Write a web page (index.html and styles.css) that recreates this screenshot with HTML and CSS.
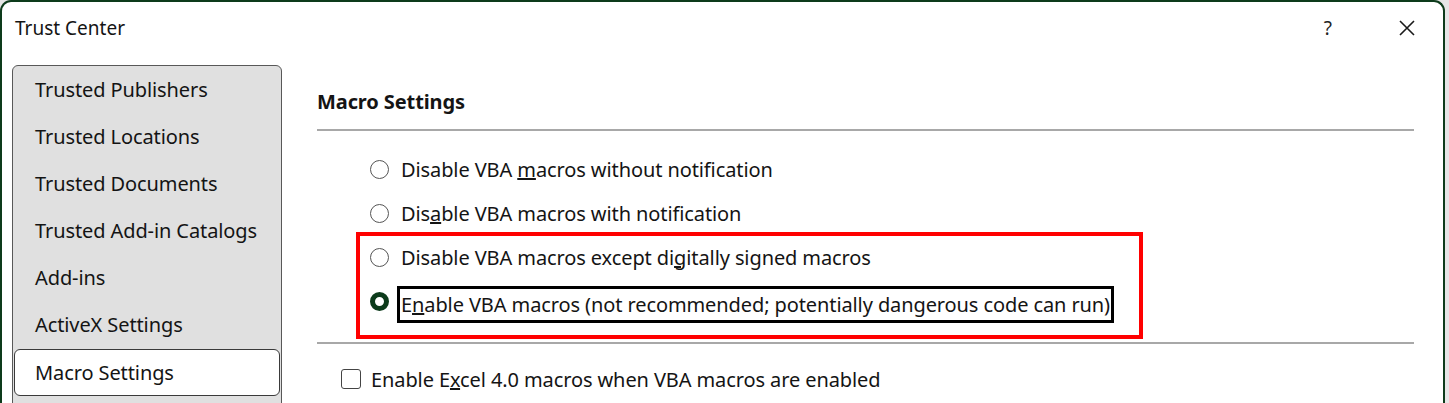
FILE: index.html
```html
<!DOCTYPE html>
<html>
<head>
<meta charset="utf-8">
<link rel="stylesheet" href="styles.css">
</head>
<body>
<div class="window">
  <div class="titlebar">
    <span class="title">Trust Center</span>
    <span class="spacer"></span>
    <span class="help">?</span>
    <span class="close"><svg width="16" height="16" viewBox="0 0 16 16"><path d="M1 1 L15 15 M15 1 L1 15" stroke="#1a1a1a" stroke-width="1.6" fill="none"/></svg></span>
  </div>
  <div class="content">
    <div class="sidebar">
      <div class="item">Trusted Publishers</div>
      <div class="item">Trusted Locations</div>
      <div class="item">Trusted Documents</div>
      <div class="item">Trusted Add-in Catalogs</div>
      <div class="item">Add-ins</div>
      <div class="item">ActiveX Settings</div>
      <div class="item selected">Macro Settings</div>
    </div>
    <div class="main">
      <div class="heading">Macro Settings</div>
      <div class="rule"></div>
      <div class="options">
        <div class="opt plain"><span class="radio"></span><span class="label">Disable VBA <u>m</u>acros without notification</span></div>
        <div class="opt plain"><span class="radio"></span><span class="label">Dis<u>a</u>ble VBA macros with notification</span></div>
        <div class="redbox">
          <div class="opt third"><span class="radio"></span><span class="label">Disable VBA macros except di<u>g</u>itally signed macros</span></div>
          <div class="opt fourth"><span class="radio checked"></span><span class="label focus">E<u>n</u>able VBA macros (not recommended; potentially dangerous code can run)</span></div>
        </div>
      </div>
      <div class="rule rule2"></div>
      <div class="check-row"><span class="checkbox"></span><span class="label">Enable E<u>x</u>cel 4.0 macros when VBA macros are enabled</span></div>
    </div>
  </div>
</div>
</body>
</html>
```
FILE: styles.css
```css
html, body {
  margin: 0;
  padding: 0;
  background: #e6e6e6;
  overflow: hidden;
}
body {
  font-family: "Noto Sans", "Open Sans", sans-serif;
  color: #141414;
  font-size: 20px;
  width: 1449px;
  height: 403px;
}
.window {
  width: 1441px;
  height: 401px;
  overflow: hidden;
  background: #fff;
  border: 2px solid #0d3b1b;
  border-bottom: none;
  border-radius: 11px 11px 0 0;
}
.titlebar {
  height: 52px;
  display: flex;
  align-items: center;
  padding-left: 13px;
  padding-right: 28px;
}
.title {
  font-size: 19px;
}
.spacer { flex: 1; }
.help {
  font-size: 19px;
  margin-right: 67px;
  color: #222;
}
.close {
  display: flex;
  width: 16px;
  height: 16px;
}
.content {
  display: flex;
  padding-top: 11px;
  padding-left: 10px;
}
.sidebar {
  width: 268px;
  height: 360px;
  flex: none;
  background: #e0e0e0;
  border: 1px solid #585858;
  border-radius: 6px;
}
.item {
  height: 47px;
  box-sizing: border-box;
  margin: 0 1px;
  padding-left: 20px;
  display: flex;
  align-items: center;
  border: 1px solid transparent;
  border-radius: 6px;
  letter-spacing: -0.1px;
}
.item.selected {
  margin-top: 1px;
  background: #fff;
  border-color: #3a3a3a;
}
.main {
  margin-left: 35px;
  width: 1097px;
  flex: none;
}
.heading {
  font-weight: bold;
  font-size: 20px;
  letter-spacing: -0.1px;
  line-height: 24px;
  padding-top: 25px;
  margin-bottom: 15px;
}
.rule {
  height: 2px;
  background: #a8a8a8;
}
.options {
  padding-left: 39px;
  padding-top: 16px;
}
.opt {
  display: flex;
  align-items: center;
  height: 44px;
}
.opt.plain {
  padding-left: 14px;
}
.label {
  letter-spacing: -0.1px;
}
.radio {
  width: 17px;
  height: 17px;
  border: 1.5px solid #555;
  border-radius: 50%;
  flex: none;
  margin-right: 12px;
  box-sizing: content-box;
}
.radio.checked {
  width: 9px;
  height: 9px;
  border: 5.5px solid #0c3b1b;
  margin-top: -6px;
}
.redbox {
  margin-top: -3px;
  width: 769px;
  border: 4px solid #ff0000;
  padding: 0 0 12px 10px;
}
.opt.third {
  height: 42px;
}
.opt.fourth {
  height: 37px;
  margin-top: 8px;
}
.focus {
  border: 3px solid #000;
  padding: 0 1px 0 1px;
  line-height: 31px;
  margin-left: -4px;
}
.rule2 {
  margin-top: 3px;
}
.check-row {
  display: flex;
  align-items: center;
  height: 70px;
  padding-left: 24px;
}
.checkbox {
  width: 18px;
  height: 18px;
  border: 1.5px solid #444;
  border-radius: 3px;
  margin-right: 10px;
  flex: none;
}
```
